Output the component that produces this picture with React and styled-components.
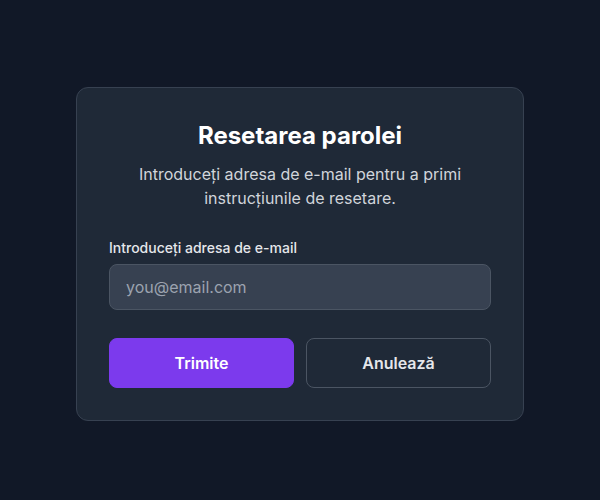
import React from "react";
import styled, { createGlobalStyle } from "styled-components";

const GlobalStyle = createGlobalStyle`
    html, body {
        margin: 0;
        padding: 0;
        background: #111827;
        font-family: Inter, "Noto Sans", sans-serif;
    }
`;

const Page = styled.main`
    min-height: 500px;
    padding-top: 87px;
    box-sizing: border-box;
`;

const Card = styled.section`
    width: 448px;
    box-sizing: border-box;
    margin: 0 auto;
    padding: 32px;
    background: #1f2937;
    border: 1px solid #374151;
    border-radius: 12px;
`;

const Heading = styled.header`
    text-align: center;

    h1 {
        margin: 0;
        font-size: 24px;
        line-height: 32px;
        font-weight: 700;
        color: #ffffff;
    }

    p {
        margin: 10px 0 0;
        font-size: 16px;
        line-height: 24px;
        color: #d1d5db;
    }
`;

const Field = styled.div`
    display: flex;
    flex-direction: column;
    gap: 6px;
    margin-top: 28px;
`;

const Label = styled.label`
    font-size: 14px;
    line-height: 20px;
    font-weight: 500;
    color: #e5e7eb;
`;

const Input = styled.input`
    height: 46px;
    box-sizing: border-box;
    padding: 0 16px;
    background: #374151;
    border: 1px solid #4b5563;
    border-radius: 8px;
    font-family: inherit;
    font-size: 16px;
    color: #f3f4f6;
    outline: none;

    &::placeholder {
        color: #9ca3af;
    }
`;

const Actions = styled.div`
    display: grid;
    grid-template-columns: 1fr 1fr;
    gap: 12px;
    margin-top: 28px;
`;

const Button = styled.button`
    height: 50px;
    border-radius: 8px;
    font-family: inherit;
    font-size: 16px;
    font-weight: 600;
    cursor: pointer;
    color: ${(p) => (p.$primary ? "#ffffff" : "#e5e7eb")};
    background: ${(p) => (p.$primary ? "#7c3aed" : "transparent")};
    border: 1px solid ${(p) => (p.$primary ? "#7c3aed" : "#4b5563")};
`;

const App = () => {
    return (
        <>
            <GlobalStyle />
            <Page>
                <Card>
                    <Heading>
                        <h1>Resetarea parolei</h1>
                        <p>Introduceți adresa de e-mail pentru a primi instrucțiunile de resetare.</p>
                    </Heading>
                    <Field>
                        <Label htmlFor="email">Introduceți adresa de e-mail</Label>
                        <Input id="email" type="email" placeholder="you@email.com" />
                    </Field>
                    <Actions>
                        <Button $primary>Trimite</Button>
                        <Button>Anulează</Button>
                    </Actions>
                </Card>
            </Page>
        </>
    );
};

export default App;
